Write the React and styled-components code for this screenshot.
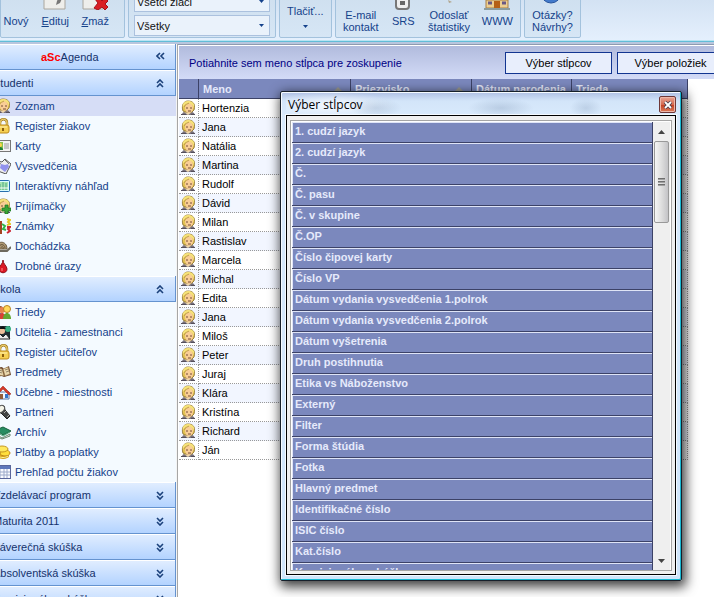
import React from 'react'
import styled, { createGlobalStyle } from 'styled-components';

const people = ['Hortenzia', 'Jana', 'Natália', 'Martina', 'Rudolf', 'Dávid', 'Milan', 'Rastislav', 'Marcela', 'Michal',
  'Edita', 'Jana', 'Miloš', 'Peter', 'Juraj', 'Klára', 'Kristína', 'Richard', 'Ján'];

const columns = ['1. cudzí jazyk', '2. cudzí jazyk', 'Č.', 'Č. pasu', 'Č. v skupine', 'Č.OP', 'Číslo čipovej karty', 'Číslo VP',
  'Dátum vydania vysvedčenia 1.polrok', 'Dátum vydania vysvedčenia 2.polrok', 'Dátum vyšetrenia', 'Druh postihnutia',
  'Etika vs Náboženstvo', 'Externý', 'Filter', 'Forma štúdia', 'Fotka', 'Hlavný predmet', 'Identifikačné číslo',
  'ISIC číslo', 'Kat.číslo', 'Komisionálne skúšky'];

const sections = [
  {
    title: 'Študenti',
    items: [
      ['person', 'Zoznam'], ['lock', 'Register žiakov'], ['card', 'Karty'], ['report', 'Vysvedčenia'],
      ['board', 'Interaktívny náhľad'], ['personAdd', 'Prijímačky'], ['marks', 'Známky'], ['snail', 'Dochádzka'], ['drop', 'Drobné úrazy'],
    ],
  },
  {
    title: 'Škola',
    items: [
      ['group', 'Triedy'], ['teacher', 'Učitelia - zamestnanci'], ['lock', 'Register učiteľov'], ['book', 'Predmety'],
      ['house', 'Učebne - miestnosti'], ['torch', 'Partneri'], ['archive', 'Archív'], ['coins', 'Platby a poplatky'], ['table', 'Prehľad počtu žiakov'],
    ],
  },
  { title: 'Vzdelávací program' },
  { title: 'Maturita 2011' },
  { title: 'Záverečná skúška' },
  { title: 'Absolventská skúška' },
  { title: 'Komisionálna skúška' },
];

const face = (
  <>
    <path d="M2 15c0-3 3-4 6-4s6 1 7 4z" fill="#77707c" />
    <path d="M4 12l4 3 4-3-2-2H6z" fill="#f0d9ae" />
    <path d="M3 11C1 5 4 1 8 1s8 2 6 9l-2 2H5z" fill="#e3c351" stroke="#8f7434" strokeWidth=".9" />
    <ellipse cx="9" cy="8" rx="4" ry="5" fill="#f9cd96" />
    <path d="M3 8c1-4 4-4 6-5 2 1 4 2 5 5 1-5-2-7-6-7S2 4 3 8z" fill="#f6e27a" />
    <path d="M4 7c1-3 4-3 5-4" fill="none" stroke="#b3923c" strokeWidth=".8" />
    <path d="M6 8h2M10 8h2M8 11h3" stroke="#754d37" />
    <path d="M1 14.5h5M11 14.5h4" stroke="#55505c" />
  </>
);

const icons = {
  person: face,
  personAdd: <>{face}<path d="M10 7h3v3h3v3h-3v3h-3v-3H7v-3h3z" fill="#3ba336" stroke="#17731e" strokeWidth=".7" /></>,
  lock: (
    <>
      <path d="M5 8V5c0-5 7-5 7 0v3" fill="none" stroke="#a98122" strokeWidth="2.5" />
      <path d="M5 8V5c0-5 7-5 7 0v3" fill="none" stroke="#ffe68a" />
      <rect x="2" y="7" width="12" height="8" rx="2" fill="#f5cf52" stroke="#bd8a1b" />
      <path d="M4 9h8" stroke="#fff1ad" />
      <path d="M8 10v3" stroke="#8a5e10" strokeWidth="2" />
    </>
  ),
  card: (
    <>
      <rect x="0.5" y="2.5" width="15" height="11" fill="#f3f3f3" stroke="#777" />
      <rect x="2" y="4" width="6" height="8" fill="#8bc34a" />
      <circle cx="5" cy="7" r="2" fill="#ffd54a" /><path d="M2 12c0-4 6-4 6 0z" fill="#207f38" />
      <path d="M9 6h5M9 8h5M9 10h5" stroke="#999" />
    </>
  ),
  report: (
    <>
      <path d="M2 3l5 1 3-3 6 5-5 10-8-3z" fill="#eee" stroke="#555" />
      <path d="M6 6l4 1 3-1 1 3-4 5-5-4z" fill="#9292ec" />
      <path d="M10 2l4 4M4 5l2 1" stroke="#777" />
    </>
  ),
  board: (
    <>
      <rect x="0.5" y="2.5" width="14" height="11" rx="1" fill="#d8fbff" stroke="#266fae" />
      <path d="M2 4h11v8H2z" fill="#a7e4b0" />
      <path d="M5 12V6M8 12V4M11 12V5" stroke="#4caa86" /><path d="M3 10h10" stroke="#fff" />
    </>
  ),
  marks: (
    <>
      <path d="M2 4h4v11H2" fill="none" stroke="#a44320" strokeWidth="2" />
      <path d="M7 6l3 2-2 3 3 1" fill="none" stroke="#31b44a" strokeWidth="2" />
      <path d="M12 1l3 1-2 2 2 2-3 1" fill="none" stroke="#e6c525" strokeWidth="2" />
      <path d="M12 9h3l-2 2 2 2-3 2" fill="none" stroke="#cc2631" strokeWidth="2" />
    </>
  ),
  snail: (
    <>
      <path d="M0 13h12l4-4" fill="none" stroke="#6d695e" strokeWidth="2" />
      <path d="M1 11c0-9 11-9 11 0z" fill="#b19b76" stroke="#66563d" />
      <path d="M4 10c0-5 6-4 6 0M6 10c0-2 3-2 2 1" fill="none" stroke="#66563d" />
    </>
  ),
  drop: <><path d="M8 2c0 4 4 6 4 9 0 5-8 5-8 0 0-3 4-5 4-9z" fill="#db1824" stroke="#8d1019" /><path d="M7 10v3" stroke="#ff8989" /></>,
  group: (
    <>
      <circle cx="5" cy="5" r="3" fill="#8e4d2c" /><path d="M0 15c0-8 9-8 9 0z" fill="#2864b8" />
      <circle cx="7" cy="6" r="3" fill="#e9824f" /><path d="M3 15c0-8 8-8 8 0z" fill="#d84235" />
      <circle cx="12" cy="5" r="3.5" fill="#ffd85b" stroke="#b98324" /><path d="M8 15c0-8 8-8 8 0z" fill="#65a832" />
    </>
  ),
  teacher: (
    <>
      <rect x="0" y="2" width="15" height="13" fill="#202e32" /><circle cx="13" cy="5" r="3" fill="#38ae82" />
      <circle cx="7" cy="7" r="3" fill="#efc09b" /><path d="M3 5l5-3 3 3z" fill="#111" />
      <path d="M2 15l3-5 3 3 3-3 4 5z" fill="#eee" stroke="#222" />
    </>
  ),
  book: (
    <>
      <path d="M1 4l6-1 2 2 5-3 2 9-7 2-2-1-6 1z" fill="#6c482f" />
      <path d="M2 4l5 1 2 7-6-1zM8 5l5-2 2 7-5 2z" fill="#ead8ad" stroke="#927346" strokeWidth=".6" />
      <path d="M4 6l3 1M4 8l3 1M10 6l3-1M11 8l3-1" stroke="#95886d" />
    </>
  ),
  house: (
    <>
      <path d="M3 8h11v7H3z" fill="#f3f7ff" stroke="#5675a4" /><path d="M1 9l7-7 8 8-2 1-6-6-6 6z" fill="#d43827" stroke="#942015" strokeWidth=".5" />
      <path d="M10 10h3v4h-3z" fill="#3475c9" /><path d="M5 10h3v5H5z" fill="#925d39" />
    </>
  ),
  torch: (
    <>
      <path d="M4 3l5-1 1 4 5 6-3 3-6-6-3-1z" fill="#424545" stroke="#222" />
      <ellipse cx="6" cy="5" rx="3" ry="4" transform="rotate(45 6 5)" fill="#f5f5e9" stroke="#555" />
      <path d="M9 9l2-2M12 13l2-2" stroke="#aaa" />
    </>
  ),
  archive: (
    <>
      <path d="M1 10l6 4 8-4v2l-8 3-6-3z" fill="#eee" stroke="#66866f" />
      <path d="M1 6l7-3 8 4-8 4z" fill="#278d62" stroke="#17603d" /><path d="M2 8l6 4 7-4" fill="none" stroke="#49aa7d" />
    </>
  ),
  coins: (
    <>
      <ellipse cx="8" cy="12" rx="6" ry="3" fill="#d7a61d" /><ellipse cx="10" cy="9" rx="5" ry="3" fill="#ffdf3c" stroke="#be8516" />
      <ellipse cx="7" cy="5" rx="6" ry="3" fill="#ffe95e" stroke="#c59720" /><path d="M3 12c3 2 7 2 10 0" stroke="#fff09a" fill="none" />
    </>
  ),
  table: (
    <>
      <rect x="0.5" y="1.5" width="15" height="13" fill="#f9faff" stroke="#59669b" /><path d="M1 2h14v3H1z" fill="#5f78bb" />
      <path d="M1 8h14M1 11h14M5 5v9M9 5v9M12 5v9" stroke="#9caaca" />
    </>
  ),
};

const tools = {
  edit: <><path d="M2 0h21v23H2z" fill="#eeeeeb" stroke="#aaa69e" /><path d="M21 10l-3 7-4 2 1-4 3-6z" fill="#777" /></>,
  remove: <><path d="M1 0h20v23H1z" fill="#eeeeeb" stroke="#aaa69e" /><path d="M13 13l4-1 3 3 3-3 3 3-3 3 3 3-3 3-3-3-4 3-4-2 4-5z" fill="#d91f23" stroke="#a51219" /></>,
  remote: <><rect x="6" y="-5" width="13" height="28" rx="3" fill="#eee" stroke="#777" strokeWidth="2" /><rect x="10" y="15" width="5" height="4" fill="#666" /></>,
  chart: <path d="M12 20l4 2-3 1z" fill="#b2a68e" />,
  home: <><path d="M2 14h22v8H2z" fill="#edcf91" stroke="#a87e46" /><path d="M0 14l13-9 13 9z" fill="#a85c38" /><path d="M10 15h6v7h-6z" fill="#b56017" /><path d="M4 17h4M18 17h4" stroke="#695985" strokeWidth="3" /><path d="M0 23h26" stroke="#8b9c9e" strokeWidth="2" /></>,
  help: <circle cx="12" cy="13" r="10" fill="#427acb" stroke="#27549c" />,
};

function Icon({ name }) {
  return <svg width="16" height="16" viewBox="0 0 16 16" aria-hidden="true">{icons[name]}</svg>;
}

function Tool({ icon, children }) {
  return (
    <ToolButton type="button">
      <svg width="26" height="24" viewBox="0 0 26 24" aria-hidden="true">{tools[icon]}</svg>
      <span>{children}</span>
    </ToolButton>
  );
}

function Arrow() {
  return <svg width="5" height="3" viewBox="0 0 5 3" aria-hidden="true"><path d="M0 0h5L2.5 3z" fill="#15428b" /></svg>;
}

function Chevrons({ up }) {
  return (
    <svg width="9" height="9" viewBox="0 0 9 9" aria-hidden="true">
      <path d={up ? 'M1 4l3-3 3 3M1 8l3-3 3 3' : 'M1 1l3 3 3-3M1 5l3 3 3-3'} fill="none" stroke="#1c427c" strokeWidth="1.6" />
    </svg>
  );
}

function Combo({ label, value }) {
  return (
    <ComboBox>
      <select aria-label={label} defaultValue={value}>
        <option>{value}</option>
      </select>
      <Arrow />
    </ComboBox>
  );
}

function App() {
  return (
    <Page>
      <GlobalStyle />
      <Ribbon>
        <Group $width={125} $padding="0 15px 0 2px">
          <Tool>Nový</Tool>
          <Tool icon="edit"><u>E</u>dituj</Tool>
          <Tool icon="remove"><u>Z</u>maž</Tool>
        </Group>
        <ComboGroup $width={148} $padding="0 5px 1px">
          <Combo label="Žiaci" value="Všetci žiaci" />
          <Combo label="Filter" value="Všetky" />
        </ComboGroup>
        <Group $width={53} $padding="0 7px">
          <PrintButton type="button">
            Tlačiť...
            <Arrow />
          </PrintButton>
        </Group>
        <Group $width={186} $padding="0 7px">
          <Tool>E-mail<br />kontakt</Tool>
          <Tool icon="remote">SRS</Tool>
          <Tool icon="chart">Odoslať<br />štatistiky</Tool>
          <Tool icon="home">WWW</Tool>
        </Group>
        <Group $width={57} $padding="0 7px">
          <Tool icon="help">Otázky?<br />Návrhy?</Tool>
        </Group>
      </Ribbon>

      <Body>
        <Sidebar>
          <Brand>
            <p><b>aSc</b>Agenda</p>
            <button type="button" aria-label="Zbaliť panel">
              <svg width="9" height="9" viewBox="0 0 9 9" aria-hidden="true">
                <path d="M4 1L1 4l3 3M8 1L5 4l3 3" fill="none" stroke="#1c427c" strokeWidth="1.6" />
              </svg>
            </button>
          </Brand>
          {sections.map((section) => (
            <section key={section.title}>
              <SectionButton type="button" aria-expanded={Boolean(section.items)}>
                {section.title}
                <Chevrons up={section.items} />
              </SectionButton>
              {section.items && section.items.map(([icon, text]) => (
                <NavLink href="#" key={text} $active={text === 'Zoznam'}>
                  <Icon name={icon} />
                  {text}
                </NavLink>
              ))}
            </section>
          ))}
        </Sidebar>

        <Main>
          <GroupBar>
            <p>Potiahnite sem meno stĺpca pre zoskupenie</p>
            <BarButton type="button">Výber stĺpcov</BarButton>
            <BarButton type="button">Výber položiek</BarButton>
          </GroupBar>
          <Students>
            <colgroup>
              <col width="20" /><col width="152" /><col width="121" /><col width="100" /><col width="116" />
            </colgroup>
            <thead>
              <tr>
                <th></th>
                <th>Meno<SortMark /></th>
                <th>Priezvisko<SortMark /></th>
                <th>Dátum narodenia</th>
                <th>Trieda</th>
              </tr>
            </thead>
            <tbody>
              {people.map((name, i) => (
                <tr key={i}>
                  <td><Icon name="person" /></td>
                  <td>{name}</td>
                  <td></td><td></td><td></td>
                </tr>
              ))}
            </tbody>
          </Students>
        </Main>
      </Body>

      <Dialog role="dialog" aria-labelledby="dialog-title">
        <TitleBar>
          <h2 id="dialog-title">Výber stĺpcov</h2>
          <CloseButton type="button" aria-label="Zavrieť">
            <svg width="8" height="8" viewBox="0 0 8 8" aria-hidden="true">
              <path d="M1 1l6 6M7 1L1 7" stroke="#453c4d" strokeWidth="3.4" /><path d="M1 1l6 6M7 1L1 7" stroke="#fff" strokeWidth="1.8" />
            </svg>
          </CloseButton>
        </TitleBar>
        <DialogBody>
          <ListBox>
            <ul>
              {columns.map((column) => <li key={column}>{column}</li>)}
            </ul>
            <ScrollBar>
              <svg width="7" height="4" viewBox="0 0 7 4" aria-hidden="true"><path d="M0 4h7L3.5 0z" fill="#444" /></svg>
              <Thumb><i /><i /><i /></Thumb>
              <svg width="7" height="4" viewBox="0 0 7 4" aria-hidden="true"><path d="M0 0h7L3.5 4z" fill="#444" /></svg>
            </ScrollBar>
          </ListBox>
        </DialogBody>
      </Dialog>
    </Page>
  )
}

export default App;

const GlobalStyle = createGlobalStyle`
    * { box-sizing: border-box; }

    body {
        margin: 0;
        overflow: hidden;
        background: #fff;
        font: 11px/12px "Liberation Sans", Arial, sans-serif;
    }

    button, select { font: inherit; }
    p, h2, ul { margin: 0; padding: 0; }
    svg { flex: none; }
`

const Page = styled.div`
    position: relative;
    display: flex;
    flex-direction: column;
    height: 100vh;
    overflow: hidden;
`

const Ribbon = styled.header`
    display: flex;
    flex: none;
    align-items: flex-end;
    gap: 3px;
    height: 45px;
    padding-bottom: 5px;
    overflow: hidden;
    background: linear-gradient(#d3e2f3, #e6f1fe);
    border-bottom: 1px solid #8f9bb0;
    box-shadow: inset 0 -2px #b9c6de, inset 0 -3px #62bdd8, inset 0 -4px #b9e4f2;
    margin-bottom: -1px;
`

const Group = styled.div`
    display: flex;
    flex: none;
    align-items: center;
    justify-content: space-between;
    width: ${(p) => p.$width}px;
    height: 64px;
    padding: ${(p) => p.$padding};
    margin-bottom: 1px;
    background: linear-gradient(#cbdcec, #d6e6f5);
    border: 1px solid #a3c2dd;
    border-radius: 2px;
`

const ComboGroup = styled(Group)`
    flex-direction: column;
    justify-content: flex-end;
    gap: 3px;
`

const ToolButton = styled.button`
    display: flex;
    flex-direction: column;
    align-items: center;
    gap: 5px;
    padding: 0;
    border: 0;
    background: none;
    color: #15428b;
`

const PrintButton = styled.button`
    display: grid;
    justify-items: center;
    gap: 8px;
    padding: 20px 0 0;
    border: 0;
    background: none;
    color: #15428b;
`

const ComboBox = styled.div`
    display: flex;
    align-items: center;
    width: 100%;
    height: 21px;
    padding-right: 5px;
    background: #eaf2fb;
    border: 1px solid #abc1de;

    select {
        flex: 1;
        appearance: none;
        padding: 0 2px;
        border: 0;
        background: none;
        color: #111;
    }
`

const Body = styled.div`
    display: flex;
    flex: 1;
    min-height: 0;
`

const Sidebar = styled.nav`
    flex: none;
    width: 186px;
    margin-left: -8px;
    background: #f4faff;
    border-right: 1px solid #a6a6a6;
    box-shadow: inset -1px 0 #f4f4f4;
    padding-right: 1px;
`

const Brand = styled.div`
    display: flex;
    align-items: center;
    height: 26px;
    padding: 0 10px 0 49px;
    background: linear-gradient(#e2eeff, #b3d3ff);
    border: solid #6593cf;
    border-width: 0 1px 1px 0;
    box-shadow: inset 0 1px #fff;
    color: #15326c;

    p { flex: 1; }
    b { color: #f00; }
    button { display: flex; padding: 0; border: 0; background: none; }
`

const SectionButton = styled.button`
    display: flex;
    align-items: center;
    justify-content: space-between;
    width: 100%;
    height: 26px;
    padding: 1px 10px 0 1px;
    background: linear-gradient(#e2eeff, #b3d3ff);
    border: solid #6593cf;
    border-width: 0 1px 1px 0;
    box-shadow: inset 0 1px #fff;
    color: #15326c;
`

const NavLink = styled.a`
    display: flex;
    align-items: center;
    gap: 4px;
    height: 20px;
    padding-left: 3px;
    background: ${(p) => (p.$active ? '#d6ddf6' : 'transparent')};
    color: #15428b;
    text-decoration: none;
`

const Main = styled.main`
    flex: 1;
    min-width: 0;
    padding: 2px 0 0 1px;
    overflow: hidden;
`

const GroupBar = styled.div`
    display: flex;
    align-items: center;
    gap: 5px;
    height: 33px;
    padding-left: 10px;
    margin-right: -10px;
    background: linear-gradient(#b1bbdd, #d3dbf7);
    color: #000084;

    p { flex: 1; white-space: nowrap; }
`

const BarButton = styled.button`
    width: 107px;
    height: 22px;
    padding: 0;
    background: #e8eefc;
    border: 1px solid #123591;
    color: #000;
`

const Students = styled.table`
    table-layout: fixed;
    width: 509px;
    border-collapse: separate;
    border-spacing: 0;

    th {
        height: 20px;
        padding: 0 4px;
        background: #7b88bd;
        border: solid #3c4267;
        border-width: 0 1px 1px 0;
        color: #e4e8fa;
        text-align: left;
        white-space: nowrap;
    }

    td {
        height: 19px;
        padding: 0 3px;
        border: dotted #999;
        border-width: 0 0 1px;
        color: #000;
    }

    td:first-child {
        padding: 0 0 0 1px;
        border-right-width: 1px;
        line-height: 0;
    }

    td:last-child { border-right-width: 1px; }
    tr:nth-child(even) td { background: #f2f6ff; }
`

const SortMark = styled.span`
    float: right;
    margin: 4px 4px 0 0;
    border: 4px solid transparent;
    border-top-width: 0;
    border-bottom-color: #9a9a90;
`

const Dialog = styled.div`
    position: absolute;
    top: 91px;
    left: 280px;
    display: flex;
    flex-direction: column;
    width: 402px;
    height: 490px;
    padding: 0 5px 5px;
    background: linear-gradient(#aebfe4, #d3e5f9 9px, #d9eafc 24px, #d0e5fb);
    border: 1px solid #17202b;
    border-radius: 2px;
    box-shadow: inset -1px -1px #19b9d2, inset 1px 1px #f5faff, 2px 4px 12px 2px rgba(0, 0, 0, .75);
`

const TitleBar = styled.div`
    display: flex;
    align-items: center;
    justify-content: space-between;
    height: 23px;
    padding: 2px 0 0 2px;
    background:
        radial-gradient(closest-side, rgba(100, 125, 160, .22), transparent) 64px 6px / 52px 20px no-repeat,
        radial-gradient(closest-side, rgba(100, 125, 160, .25), transparent) 182px 6px / 66px 20px no-repeat,
        radial-gradient(closest-side, rgba(100, 125, 160, .22), transparent) 284px 6px / 32px 20px no-repeat,
        radial-gradient(closest-side, rgba(255, 255, 255, .7), transparent) -20px 0 / 130px 26px no-repeat;

    h2 { font: 12px/16px "Open Sans", "Noto Sans", sans-serif; }
`

const CloseButton = styled.button`
    display: grid;
    place-items: center;
    width: 17px;
    height: 17px;
    padding: 0;
    background: linear-gradient(#e9a596, #d5694f 50%, #c13d20 50%, #dc7b5a);
    border: 1px solid #6f3838;
    border-radius: 2px;
    box-shadow: inset 0 0 0 1px #edb7a9;
`

const DialogBody = styled.div`
    flex: 1;
    min-height: 0;
    padding: 4px 3px 3px;
    background: #f0f0f0;
    border: 1px solid #000;
    box-shadow: 0 0 0 1px #f4faff;
`

const ListBox = styled.div`
    display: flex;
    height: 100%;
    border: 1px solid #a5a5a5;
    background: #fff;
    padding: 1px 1px 0;

    ul {
        flex: 1;
        overflow: hidden;
        list-style: none;
    }

    li {
        height: 21px;
        padding: 0 3px;
        background: #7b88bd;
        border: solid #3c4267;
        border-width: 0 1px 1px 0;
        box-shadow: inset 1px 1px #dfe4f6;
        color: #e6eafb;
        font-weight: bold;
        line-height: 19px;
    }
`

const ScrollBar = styled.div`
    display: flex;
    flex-direction: column;
    align-items: center;
    width: 17px;
    padding: 8px 1px 7px;
    background: #efefef;

    > svg:last-child { margin-top: auto; }
`

const Thumb = styled.div`
    display: flex;
    flex-direction: column;
    align-items: center;
    justify-content: center;
    gap: 1px;
    width: 15px;
    height: 82px;
    margin-top: 7px;
    background: linear-gradient(90deg, #f5f5f5, #dedede 50%, #c3c3c6);
    border: 1px solid #999;
    border-radius: 2px;

    i {
        width: 7px;
        height: 2px;
        background: linear-gradient(#555, #bbb);
    }
`
